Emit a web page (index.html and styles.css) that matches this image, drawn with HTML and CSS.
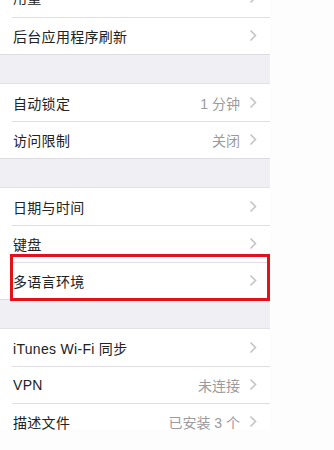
FILE: index.html
```html
<!DOCTYPE html>
<html lang="zh-CN">
<head>
<meta charset="utf-8">
<link rel="stylesheet" href="styles.css">
</head>
<body>
<div class="screen">
  <div class="group group-first">
    <div class="row row-cut"><span class="label">用量</span><span class="right"><svg class="chev" viewBox="0 0 8 13"><polyline points="1.5,1.5 6.5,6.5 1.5,11.5"/></svg></span></div>
    <div class="row"><span class="label">后台应用程序刷新</span><span class="right"><svg class="chev" viewBox="0 0 8 13"><polyline points="1.5,1.5 6.5,6.5 1.5,11.5"/></svg></span></div>
  </div>
  <div class="group">
    <div class="row"><span class="label">自动锁定</span><span class="right"><span class="value">1 分钟</span><svg class="chev" viewBox="0 0 8 13"><polyline points="1.5,1.5 6.5,6.5 1.5,11.5"/></svg></span></div>
    <div class="row"><span class="label">访问限制</span><span class="right"><span class="value">关闭</span><svg class="chev" viewBox="0 0 8 13"><polyline points="1.5,1.5 6.5,6.5 1.5,11.5"/></svg></span></div>
  </div>
  <div class="group">
    <div class="row"><span class="label">日期与时间</span><span class="right"><svg class="chev" viewBox="0 0 8 13"><polyline points="1.5,1.5 6.5,6.5 1.5,11.5"/></svg></span></div>
    <div class="row"><span class="label">键盘</span><span class="right"><svg class="chev" viewBox="0 0 8 13"><polyline points="1.5,1.5 6.5,6.5 1.5,11.5"/></svg></span></div>
    <div class="row highlighted"><span class="label">多语言环境</span><span class="right"><svg class="chev" viewBox="0 0 8 13"><polyline points="1.5,1.5 6.5,6.5 1.5,11.5"/></svg></span><span class="mark"></span></div>
  </div>
  <div class="group">
    <div class="row"><span class="label">iTunes Wi-Fi 同步</span><span class="right"><svg class="chev" viewBox="0 0 8 13"><polyline points="1.5,1.5 6.5,6.5 1.5,11.5"/></svg></span></div>
    <div class="row"><span class="label">VPN</span><span class="right"><span class="value">未连接</span><svg class="chev" viewBox="0 0 8 13"><polyline points="1.5,1.5 6.5,6.5 1.5,11.5"/></svg></span></div>
    <div class="row"><span class="label">描述文件</span><span class="right"><span class="value">已安装 3 个</span><svg class="chev" viewBox="0 0 8 13"><polyline points="1.5,1.5 6.5,6.5 1.5,11.5"/></svg></span></div>
  </div>
</div>
</body>
</html>
```

FILE: styles.css
```css
html, body {
  margin: 0;
  padding: 0;
  background: #fdfdfd;
}
body {
  font-family: "Liberation Sans", "Noto Sans CJK SC", sans-serif;
  color: #222;
}
.screen {
  width: 270px;
  height: 430px;
  overflow: hidden;
  background: #efeff4;
  display: flex;
  flex-direction: column;
  gap: 30px;
}
.group {
  background: #fff;
  display: flex;
  flex-direction: column;
  box-shadow: 0 1px 0 #dcdce0, 0 -1px 0 #e2e2e6;
  flex-shrink: 0;
}
.group-first {
  box-shadow: 0 1px 0 #dcdce0;
}
.row {
  position: relative;
  height: 37px;
  box-sizing: border-box;
  display: flex;
  align-items: center;
  justify-content: space-between;
  padding: 0 13px 0 13px;
  font-size: 14px;
}
.row + .row::before {
  content: "";
  position: absolute;
  left: 12px;
  right: 0;
  top: 0;
  height: 1px;
  background: #dfdfe3;
}
.row-cut {
  height: 40px;
  margin-top: -23px;
}
.label {
  letter-spacing: 0.3px;
}
.right {
  display: flex;
  align-items: center;
  gap: 9px;
}
.value {
  color: #9a9a9f;
  font-size: 14px;
}
.chev {
  width: 8px;
  height: 13px;
  fill: none;
  stroke: #c4c4c9;
  stroke-width: 1.6;
}
.mark {
  position: absolute;
  left: 10px;
  right: 0;
  top: -8px;
  bottom: -2px;
  border: 3px solid #e0121b;
}
```
